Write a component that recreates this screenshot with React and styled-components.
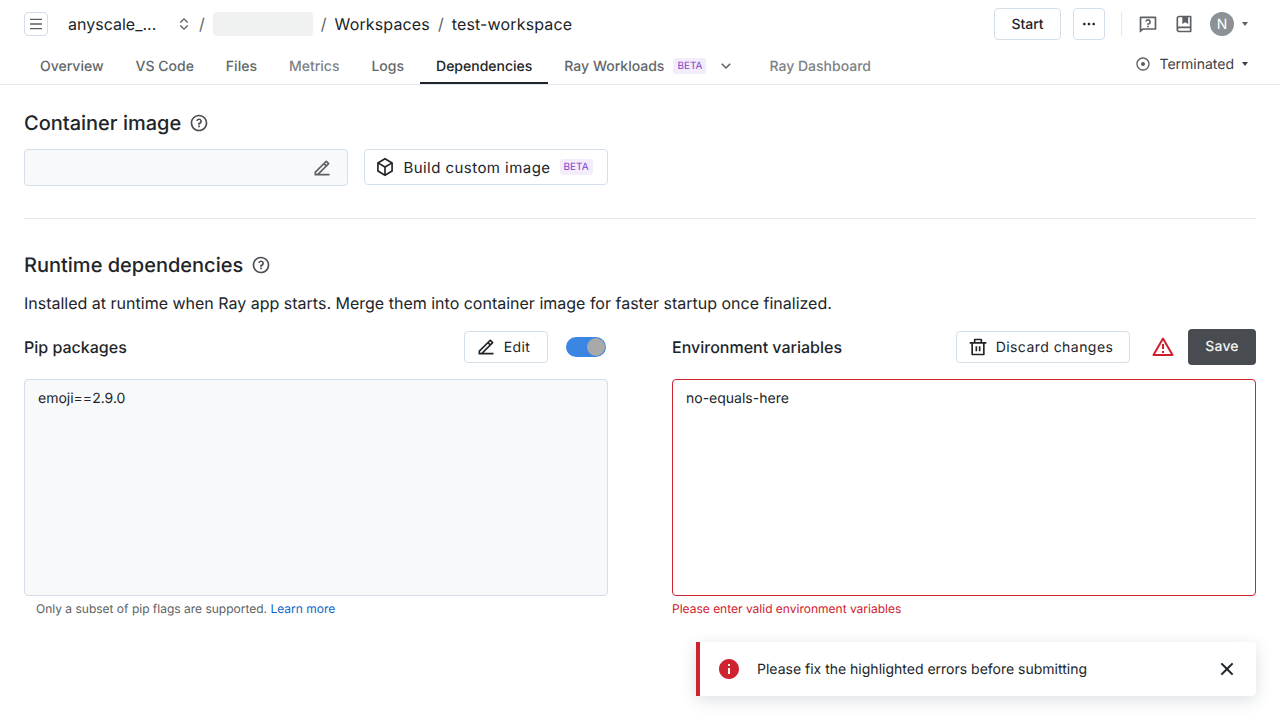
import React from "react";
import styled, { createGlobalStyle } from "styled-components";
import {
  RiMenuLine, RiExpandUpDownLine, RiMoreFill, RiQuestionnaireLine, RiBookMarkedLine, RiArrowDownSLine,
  RiRecordCircleLine, RiQuestionLine, RiEdit2Line, RiBox3Line, RiDeleteBinLine, RiAlertLine,
  RiInformationFill, RiCloseLine,
} from "react-icons/ri";

const Global = createGlobalStyle`
  html, body { margin: 0; padding: 0; background: #fff; }
  body { font-family: Inter, "Liberation Sans", sans-serif; color: #212529; width: 1280px; height: 720px; overflow: hidden; position: relative; text-rendering: geometricPrecision; }
  * { box-sizing: border-box; }
`;

const Page = styled.div`width: 1280px; height: 720px; position: relative;`;
const Header = styled.header`height: 85px; border-bottom: 1px solid #e3e8ee; padding: 0 24px; display: flex; flex-direction: column;`;
const TopRow = styled.div`height: 48px; display: flex; align-items: center; justify-content: space-between;`;
const Crumbs = styled.div`display: flex; align-items: center; font-size: 16px; line-height: 24px; color: #212529;`;
const MenuButton = styled.button`width: 24px; height: 24px; padding: 0; border: 1px solid #d5dfe9; border-radius: 4px; background: #fff; color: #5c5f63; display: flex; align-items: center; justify-content: center; margin-right: 20px;`;
const Org = styled.span`width: 108px;`;
const Sep = styled.span`color: #5c5f63; margin: 0 8px;`;
const Blank = styled.span`width: 100px; height: 24px; border-radius: 4px; background: #f0f2f2;`;
const UpDown = styled.span`display: flex; width: 16px; margin-right: -1px; color: #5c5f63;`;
const Crumb = styled.span`letter-spacing: 0.15px;`;
const Actions = styled.div`display: flex; align-items: center; margin-right: 8px;`;
const OutlineButton = styled.button`
  font-family: inherit; font-size: ${p => p.$fs || 14}px; font-weight: ${p => p.$fw || 500}; color: #212529; background: #fff;
  border: 1px solid #d5dfe9; border-radius: 4px; display: inline-flex; align-items: center; justify-content: center;
  padding: 0 ${p => p.$pr || 0}px 0 0; width: ${p => p.$w}px; height: ${p => p.$h}px; gap: ${p => p.$gap || 0}px; letter-spacing: ${p => p.$ls || 0}px;
  margin-right: ${p => p.$mr || 0}px; text-rendering: geometricPrecision;
`;
const VLine = styled.span`width: 1px; height: 24px; background: #e3e8ee; margin: 0 16px;`;
const IconSlot = styled.span`display: flex; color: #5c5f63; margin-right: ${p => p.$mr || 0}px;`;
const Avatar = styled.span`width: 24px; height: 24px; border-radius: 50%; background: #8c9196; color: #fff; font-size: 14px; display: flex; align-items: center; justify-content: center;`;
const Caret = styled.span`width: 0; height: 0; border-left: 3.5px solid transparent; border-right: 3.5px solid transparent; border-top: 4px solid ${p => p.$c || "#5c5f63"}; margin-left: ${p => p.$ml || 0}px;`;
const TabRow = styled.div`height: 36px; display: flex; justify-content: space-between;`;
const Tabs = styled.nav`display: flex;`;
const Tab = styled.div`
  height: 36px; padding: 2px ${p => p.$flush ? 0 : 16}px 0 16px; display: flex; align-items: center; font-size: 14px; font-weight: 500;
  color: ${p => p.$active ? "#212529" : p.$muted ? "#7d8185" : "#62666a"};
  border-bottom: 2px solid ${p => p.$active ? "#212529" : "transparent"};
`;
const Beta = styled.span`margin-left: ${p => p.$ml}px; font-size: 10px; line-height: 16px; height: 16px; padding: 0 4px; border-radius: 3px; background: #f3ecfa; color: #8344c8; font-weight: 400; letter-spacing: 0;`;
const Chevron = styled.span`display: flex; margin-left: 11px; margin-right: 18px; color: #5c5f63;`;
const Status = styled.div`display: flex; align-items: center; height: 32px; margin-right: 8px; font-size: 14px; color: #3d4045;`;
const StatusLabel = styled.span`margin-left: 8px;`;

const Main = styled.main`padding: 24px 24px 0;`;
const SectionTitle = styled.h2`margin: 0; display: flex; align-items: center; gap: 8px; font-size: 20px; line-height: 28px; font-weight: 500; color: #212529;`;
const Help = styled.span`display: flex; color: #4a4d51;`;
const ImageRow = styled.div`display: flex; gap: 16px; margin-top: 12px; align-items: flex-start;`;
const ImageInput = styled.div`width: 324px; height: 37px; background: #f7f9fb; border: 1px solid #d5dfe9; border-radius: 4px; display: flex; align-items: center; justify-content: flex-end; padding-right: 15px; color: #5c5f63;`;
const Divider = styled.hr`border: 0; border-top: 1px solid #e3e8ee; margin: 32px 0 32px;`;
const Desc = styled.p`margin: 12px 0 0; font-size: 16px; line-height: 24px; color: #212529;`;
const Columns = styled.div`display: grid; grid-template-columns: 584px 584px; column-gap: 64px; margin-top: 14px;`;
const Column = styled.section`display: flex; flex-direction: column;`;
const ColHead = styled.div`height: 36px; display: flex; align-items: center;`;
const ColTitle = styled.h3`margin: 0; flex: 1; font-size: 16px; font-weight: 500; color: #212529;`;
const Toggle = styled.span`width: 40px; height: 20px; margin: 0 2px 0 18px; border-radius: 10px; background: #3a86e2; display: flex; align-items: center; justify-content: flex-end; padding-right: 1px;`;
const Knob = styled.span`width: 18px; height: 18px; border-radius: 50%; background: #a9a9a9;`;
const SaveButton = styled.button`width: 68px; height: 36px; border: 0; border-radius: 4px; background: #484c50; color: #f3f4f5; font-family: inherit; font-size: 14px; font-weight: 500; letter-spacing: 0.2px; padding: 0 0 2px; text-rendering: geometricPrecision;`;
const WarnIcon = styled.span`display: flex; color: #d0202e; margin: 0 13px 0 21px;`;
const Editor = styled.div`
  margin-top: 14px; height: 217px; border-radius: 4px; padding: 10px 13px; font-size: 14px; line-height: 18px; color: #212529;
  background: ${p => p.$error ? "#fff" : "#f7f9fb"}; border: 1px solid ${p => p.$error ? "#cf2330" : "#d5dfe9"};
`;
const Helper = styled.div`font-size: 12px; line-height: 16px; margin-top: 5px; padding-left: ${p => p.$error ? 0 : 12}px; color: ${p => p.$error ? "#d0202e" : "#5c5f63"};`;
const Link = styled.a`color: #0b67c8;`;
const Toast = styled.div`
  position: absolute; left: 696px; top: 642px; width: 560px; height: 54px; background: #fff; border-left: 4px solid #cf2330;
  border-radius: 0 4px 4px 0; box-shadow: 0 4px 16px rgba(60, 75, 100, 0.18); display: flex; align-items: center;
  font-size: 14px; color: #212529; padding: 0 17px;
`;
const ToastIcon = styled.span`display: flex; color: #cf2330;`;
const ToastText = styled.span`flex: 1; margin-left: 16px;`;
const ToastClose = styled.span`display: flex; color: #212529;`;

export default function App() {
  return (
    <Page>
      <Global />
      <Header>
        <TopRow>
          <Crumbs>
            <MenuButton><RiMenuLine size={16} /></MenuButton>
            <Org>anyscale_...</Org>
            <UpDown><RiExpandUpDownLine size={16} /></UpDown>
            <Sep>/</Sep>
            <Blank />
            <Sep>/</Sep>
            <Crumb>Workspaces</Crumb>
            <Sep>/</Sep>
            <Crumb>test-workspace</Crumb>
          </Crumbs>
          <Actions>
            <OutlineButton $w={67} $h={32} $mr={12}>Start</OutlineButton>
            <OutlineButton $w={32} $h={32}><RiMoreFill size={16} /></OutlineButton>
            <VLine />
            <IconSlot $mr={16}><RiQuestionnaireLine size={20} /></IconSlot>
            <IconSlot $mr={16}><RiBookMarkedLine size={20} /></IconSlot>
            <Avatar>N</Avatar>
            <Caret $ml={8} />
          </Actions>
        </TopRow>
        <TabRow>
          <Tabs>
            <Tab>Overview</Tab>
            <Tab>VS Code</Tab>
            <Tab>Files</Tab>
            <Tab $muted>Metrics</Tab>
            <Tab>Logs</Tab>
            <Tab $active>Dependencies</Tab>
            <Tab $flush>Ray Workloads<Beta $ml={9}>BETA</Beta><Chevron><RiArrowDownSLine size={18} /></Chevron></Tab>
            <Tab $muted>Ray Dashboard</Tab>
          </Tabs>
          <Status>
            <IconSlot><RiRecordCircleLine size={16} /></IconSlot>
            <StatusLabel>Terminated</StatusLabel>
            <Caret $ml={8} $c="#3d4045" />
          </Status>
        </TabRow>
      </Header>
      <Main>
        <SectionTitle>Container image <Help><RiQuestionLine size={20} /></Help></SectionTitle>
        <ImageRow>
          <ImageInput><RiEdit2Line size={20} /></ImageInput>
          <OutlineButton $w={244} $h={36} $gap={8} $ls={0.45} $fs={15} $fw={400} $pr={4}>
            <RiBox3Line size={20} />Build custom image<Beta $ml={1}>BETA</Beta>
          </OutlineButton>
        </ImageRow>
        <Divider />
        <SectionTitle>Runtime dependencies <Help><RiQuestionLine size={20} /></Help></SectionTitle>
        <Desc>Installed at runtime when Ray app starts. Merge them into container image for faster startup once finalized.</Desc>
        <Columns>
          <Column>
            <ColHead>
              <ColTitle>Pip packages</ColTitle>
              <OutlineButton $w={84} $h={32} $gap={8} $fw={400} $ls={0.4} $pr={6}><RiEdit2Line size={20} />Edit</OutlineButton>
              <Toggle><Knob /></Toggle>
            </ColHead>
            <Editor>emoji==2.9.0</Editor>
            <Helper>Only a subset of pip flags are supported. <Link>Learn more</Link></Helper>
          </Column>
          <Column>
            <ColHead>
              <ColTitle>Environment variables</ColTitle>
              <OutlineButton $w={174} $h={32} $gap={8} $fw={400} $ls={0.45} $pr={5}><RiDeleteBinLine size={20} />Discard changes</OutlineButton>
              <WarnIcon><RiAlertLine size={24} /></WarnIcon>
              <SaveButton>Save</SaveButton>
            </ColHead>
            <Editor $error>no-equals-here</Editor>
            <Helper $error>Please enter valid environment variables</Helper>
          </Column>
        </Columns>
      </Main>
      <Toast>
        <ToastIcon><RiInformationFill size={24} /></ToastIcon>
        <ToastText>Please fix the highlighted errors before submitting</ToastText>
        <ToastClose><RiCloseLine size={24} /></ToastClose>
      </Toast>
    </Page>
  );
}
